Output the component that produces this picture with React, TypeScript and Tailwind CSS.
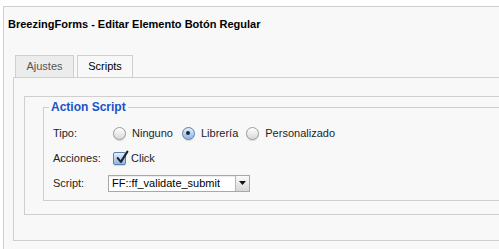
import React from 'react'

const Radio = ({ checked }: { checked?: boolean }) => (
    <span
        className={
            checked
                ? 'inline-flex h-[13px] w-[13px] shrink-0 items-center justify-center rounded-full border border-[#5d80ad] bg-gradient-to-b from-[#e3eefb] to-[#8fb6e4] shadow-[0_1px_1px_rgba(0,0,0,0.15)]'
                : 'inline-flex h-[13px] w-[13px] shrink-0 items-center justify-center rounded-full border border-[#9b9b9b] bg-gradient-to-b from-white to-[#d9d9d9] shadow-[0_1px_1px_rgba(0,0,0,0.15)]'
        }
    >
        {checked && <span className="h-[4px] w-[4px] rounded-full bg-[#1c2736]" />}
    </span>
)

const Checkbox = () => (
    <span className="relative inline-flex h-[13px] w-[13px] shrink-0 items-center justify-center rounded-[2px] border border-[#5d80ad] bg-gradient-to-b from-[#e3eefb] to-[#8fb6e4] shadow-[0_1px_1px_rgba(0,0,0,0.15)]">
        <svg viewBox="0 0 13 13" className="absolute left-[1px] top-[-3px] h-[14px] w-[14px]">
            <path d="M2.5 7.5 L5.5 11 L11.5 1.5" fill="none" stroke="#1b2535" strokeWidth="2" strokeLinecap="round" strokeLinejoin="round" />
        </svg>
    </span>
)

const App = () => {
    return (
        <div className="h-[249px] w-full overflow-hidden bg-white font-['Liberation_Sans',Arial,sans-serif] text-[11px] text-[#1e1e1e]">
            <div className="ml-[3px] -mr-8 mt-[6px] h-[300px] border-l border-t border-[#cfcfcf] bg-[#f8f8f8] pl-[4px] pt-[11px]">

                {/* Title */}
                <h1 className="text-[11px] font-bold leading-[13px] text-black">BreezingForms - Editar Elemento Botón Regular</h1>

                <div className="ml-[5px] mt-[24px]">
                    {/* Tabs */}
                    <div className="flex items-end gap-[3px] pl-[2px]">
                        <div className="flex h-[22px] w-[59px] items-center justify-center border-l border-r border-t border-[#cfcfcf] bg-[#ececec] text-[#555]">Ajustes</div>
                        <div className="flex h-[22px] w-[56px] items-center justify-center border-l border-r border-t border-[#cfcfcf] bg-[#f8f8f8] text-black">Scripts</div>
                    </div>

                    {/* Tab panel */}
                    <div className="h-[164px] border-b border-l border-t border-[#cfcfcf] pl-[10px] pt-[18px]">
                        <div className="h-[119px] border-b border-l border-t border-[#cfcfcf] pl-[18px]">
                            <fieldset className="mt-[3px] border border-[#cfcfcf] pb-[5px] pl-[5px] pt-[7px]">
                                <legend className="px-[2px] text-[12px] font-bold leading-[14px] text-[#1a52c6]">Action Script</legend>

                                <div className="flex flex-col gap-[1px] pl-[4px]">
                                    <div className="flex h-[24px] items-center">
                                        <span className="w-[55px]">Tipo:</span>
                                        <div className="ml-[5px] flex items-center">
                                            <Radio />
                                            <span className="ml-[6px] mr-[9px]">Ninguno</span>
                                            <Radio checked />
                                            <span className="ml-[6px] mr-[8px]">Librería</span>
                                            <Radio />
                                            <span className="ml-[6px]">Personalizado</span>
                                        </div>
                                    </div>

                                    <div className="flex h-[24px] items-center">
                                        <span className="w-[55px]">Acciones:</span>
                                        <div className="ml-[5px] flex items-center">
                                            <Checkbox />
                                            <span className="ml-[5px]">Click</span>
                                        </div>
                                    </div>

                                    <div className="flex h-[24px] items-center">
                                        <span className="w-[55px]">Script:</span>
                                        <div className="flex h-[17px] w-[142px] items-center border border-[#a8a8a8] bg-white shadow-[inset_0_1px_1px_rgba(0,0,0,0.08)]">
                                            <span className="flex-1 pl-[3px] text-black">FF::ff_validate_submit</span>
                                            <span className="flex h-[15px] w-[14px] items-center justify-center border-l border-[#b5b5b5] bg-gradient-to-b from-[#fbfbfb] to-[#d6d6d6]">
                                                <svg viewBox="0 0 7 4" className="h-[4px] w-[7px]">
                                                    <path d="M0 0 L7 0 L3.5 4 Z" fill="#111" />
                                                </svg>
                                            </span>
                                        </div>
                                    </div>
                                </div>
                            </fieldset>
                        </div>
                    </div>
                </div>
            </div>
        </div>
    )
}

export default App
